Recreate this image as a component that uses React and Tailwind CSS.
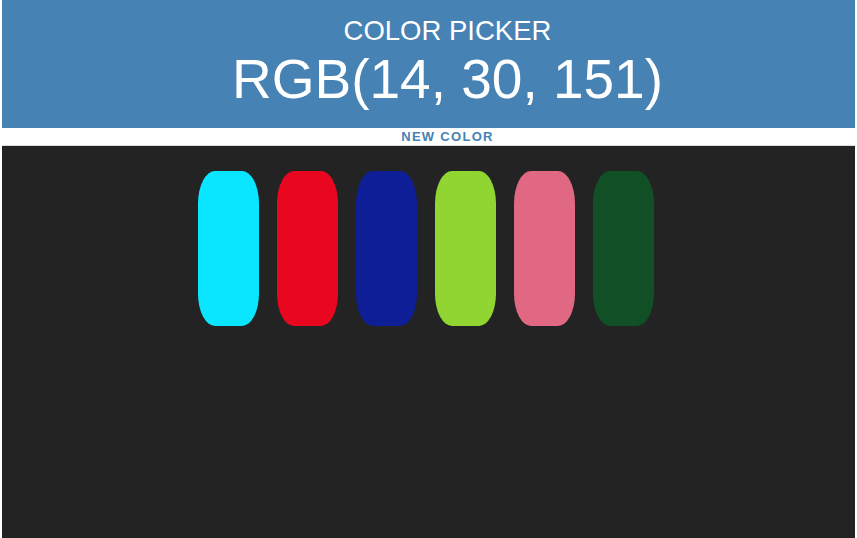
import React from 'react';

const colors = ['#0ae6ff', '#e8071e', '#0e1e97', '#90d532', '#e06883', '#114f25'];

const App = () => {
  return (
    <div className="min-h-[538px] px-[2px] bg-white font-['Liberation_Sans',Arial,sans-serif]">
      <div className="h-[128px] bg-[#4682b4] text-white text-center flex flex-col items-center pt-[14px] pl-[38px]">
        <div className="text-[27.5px] leading-[34px] uppercase">Color Picker</div>
        <div className="text-[55px] leading-[62px]">RGB(14, 30, 151)</div>
      </div>
      <div className="h-[18px] border-b border-[#dddddd] flex justify-center items-center pl-[38px]">
        <button className="text-[13px] font-bold tracking-[1.3px] text-[#4682b4] uppercase leading-none">New Color</button>
      </div>
      <div className="h-[392px] bg-[#232323]">
        <div className="w-[480px] mx-auto flex pt-[25px]">
          {colors.map(c => (
            <div key={c} className="w-[61px] h-[155px] mx-[9px] rounded-[28%/21%]" style={{ backgroundColor: c }} />
          ))}
        </div>
      </div>
    </div>
  );
};

export default App;
